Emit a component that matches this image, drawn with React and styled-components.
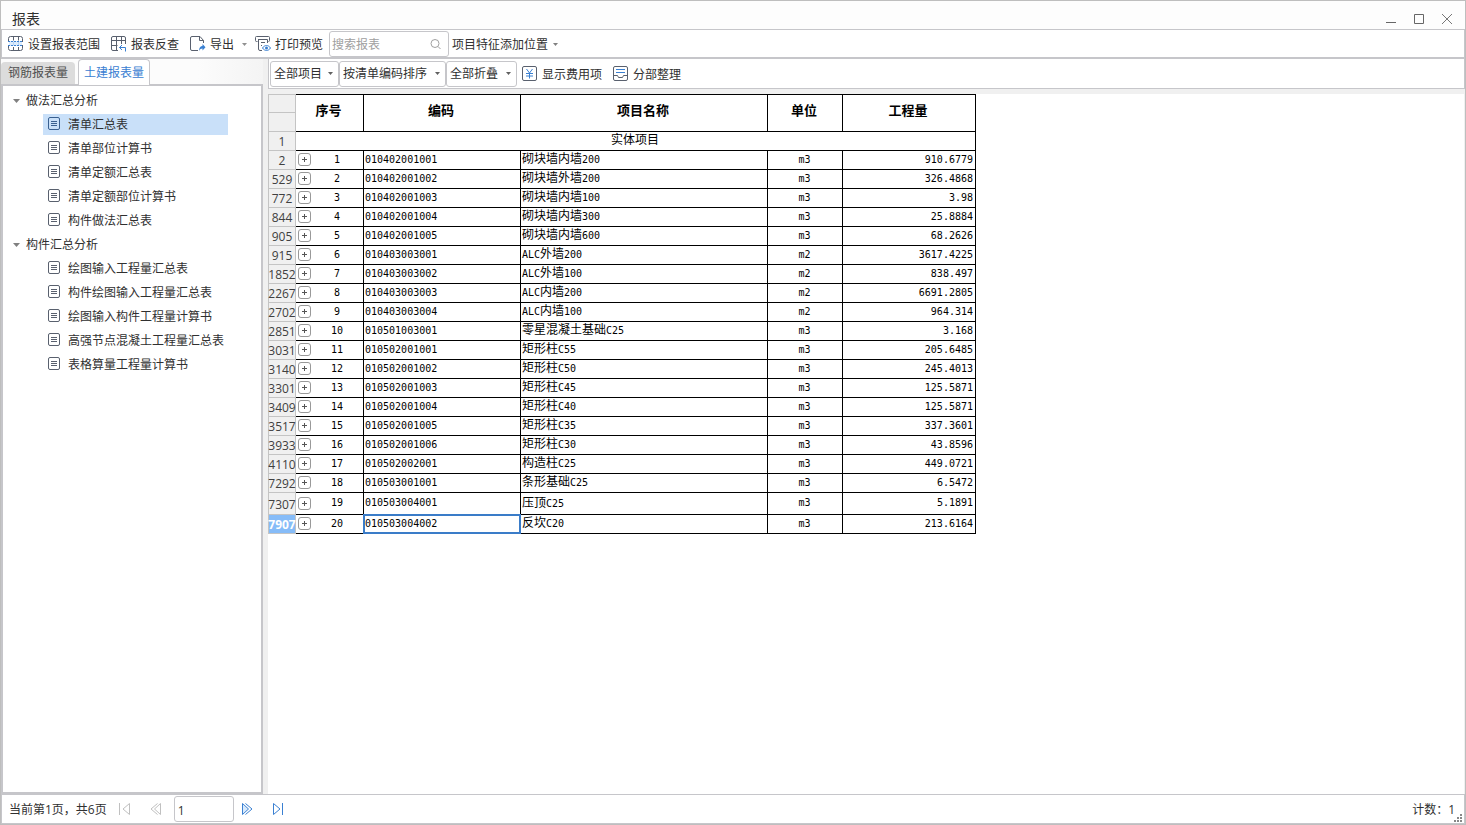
import React from "react";
import styled, { createGlobalStyle } from "styled-components";

const LINE = "#c6c6ca";
const INK = "#59606e";
const BLUE = "#3a80d2";

const GlobalStyle = createGlobalStyle`
  *, *::before, *::after { box-sizing: border-box; }
  body { margin: 0; }
  body, button, input, select {
    font-family: "Open Sans", "Noto Sans CJK SC", sans-serif;
    font-size: 12px;
    line-height: 18px;
    color: #303030;
  }
`;

const Window = styled.div`
  display: flex;
  flex-direction: column;
  height: 100vh;
  border: 1px solid #bebebe;
  background: #f0f0f0;
`;

const TitleBar = styled.header`
  display: flex;
  align-items: center;
  height: 28px;
  padding: 8px 12px 0 11px;
  background: #fdfdfd;
`;

const Title = styled.h1`
  flex: 1;
  margin: 0;
  font-size: 14px;
  line-height: 20px;
  font-weight: 400;
`;

const WindowButtons = styled.div`
  display: flex;
  gap: 16px;
`;

const IconButton = styled.button`
  display: flex;
  padding: 0;
  border: 0;
  background: none;
`;

const ToolBar = styled.div`
  display: flex;
  align-items: center;
  height: 30px;
  padding: 0 6px;
  border: 1px solid ${LINE};
  border-bottom-width: 2px;
  background: #fff;
`;

const ToolButton = styled.button`
  display: flex;
  align-items: center;
  gap: ${(p) => p.$gap || 4}px;
  margin-left: ${(p) => p.$before || 0}px;
  margin-right: ${(p) => p.$after || 0}px;
  padding: 2px 0 0;
  border: 0;
  background: none;
  white-space: nowrap;
  svg { margin-bottom: 1px; }
`;

const ToolText = styled.span`
  padding-top: 1px;
`;

const SearchBox = styled.label`
  display: flex;
  align-items: center;
  width: 120px;
  height: 26px;
  margin-right: 3px;
  padding: 0 6px 0 2px;
  border: 1px solid ${LINE};
  border-radius: 3px;
`;

const SearchInput = styled.input`
  flex: 1;
  min-width: 0;
  padding: 2px 0 0;
  border: 0;
  outline: 0;
  background: none;
  &::placeholder { color: #a0a0a0; }
`;

const Main = styled.div`
  display: flex;
  flex: 1;
  min-height: 0;
`;

const SideBar = styled.aside`
  display: flex;
  flex-direction: column;
  flex: none;
  width: 262px;
`;

const Tabs = styled.div`
  display: flex;
  align-items: flex-end;
  gap: 3px;
  height: 25px;
  background: linear-gradient(to right, #fcfcfc 75%, #f4f4f4);
`;

const Tab = styled.button`
  position: relative;
  height: ${(p) => (p.$active ? 26 : 22)}px;
  margin-bottom: ${(p) => (p.$active ? -1 : 0)}px;
  padding: 0 ${(p) => (p.$active ? 5 : 7)}px;
  border: ${(p) => (p.$active ? `1px solid ${LINE}` : "0")};
  border-bottom: 0;
  border-radius: 4px 4px 0 0;
  background: ${(p) => (p.$active ? "#fff" : "#dcdcdc")};
  color: ${(p) => (p.$active ? BLUE : "#505050")};
`;

const Tree = styled.nav`
  flex: 1;
  padding-top: 3px;
  border: 2px solid ${LINE};
  background: #fff;
`;

const List = styled.ul`
  margin: 0;
  padding: 0;
  list-style: none;
`;

const GroupLabel = styled.button`
  display: flex;
  align-items: center;
  gap: 6px;
  height: 24px;
  padding: 0 0 0 10px;
  border: 0;
  background: none;
`;

const Leaf = styled.li`
  display: flex;
  height: 24px;
  padding: 1px 0 0 40px;
`;

const LeafLink = styled.a`
  display: flex;
  align-items: center;
  gap: 7px;
  width: 185px;
  height: 21px;
  padding-left: 4px;
  background: ${(p) => (p.$selected ? "#c9e0f9" : "none")};
  color: ${(p) => (p.$selected ? "#3a6090" : INK)};
  text-decoration: none;
  white-space: nowrap;
  svg { margin-bottom: 1px; }
`;

const LeafText = styled.span`
  padding-top: 1px;
  color: #303030;
`;

const Content = styled.main`
  display: flex;
  flex-direction: column;
  flex: 1;
  min-width: 0;
  padding-left: 5px;
`;

const FilterBar = styled.div`
  display: flex;
  align-items: center;
  height: 30px;
  padding-left: 1px;
  border: 1px solid ${LINE};
  border-top: 0;
  background: #fff;
`;

const SelectBox = styled.span`
  display: grid;
  align-items: center;
  width: ${(p) => p.$width}px;
  svg { grid-area: 1 / 1; justify-self: end; margin-right: 6px; pointer-events: none; }
`;

const Select = styled.select`
  grid-area: 1 / 1;
  width: 100%;
  height: 26px;
  padding: 1px 0 0 3px;
  border: 1px solid ${LINE};
  border-radius: 3px;
  background: #fff;
  appearance: none;
`;

const Sheet = styled.div`
  flex: 1;
  min-height: 0;
  margin: 5px 1px 0 0;
  background: #fff;
  overflow: auto;
`;

const Table = styled.table`
  table-layout: fixed;
  width: 708px;
  border-collapse: separate;
  border-spacing: 0;
  color: #000;
`;

const Row = styled.tr`
  height: ${(p) => (p.$tall ? 22 : 19)}px;
`;

const Gutter = styled.th`
  padding: 2px 0 0;
  border: 1px solid #c4c4c4;
  border-top-width: ${(p) => (p.$first ? 1 : 0)}px;
  background: ${(p) => (p.$selected ? "#86bcf8" : "#f0f0f0")};
  color: ${(p) => (p.$selected ? "#fff" : "#404040")};
  line-height: 16px;
  font-weight: ${(p) => (p.$selected ? 700 : 400)};
  div { display: flex; justify-content: center; }
`;

const HeadCell = styled.th`
  padding: 0 2px 6px 0;
  border: 1px solid #000;
  border-left-width: 0;
  font-size: 13px;
  font-weight: 700;
`;

const Cell = styled.td`
  position: relative;
  padding: 0 2px 1px 1px;
  border: 1px solid #000;
  border-width: 0 1px 1px 0;
  font-family: "DejaVu Sans Mono", "Noto Sans CJK SC", monospace;
  font-size: 10px;
  line-height: 16px;
  text-align: ${(p) => p.$align || "left"};
  white-space: nowrap;
  &::after {
    content: "";
    display: ${(p) => (p.$selected ? "block" : "none")};
    position: absolute;
    inset: -1px;
    border: 2px solid #3a7cc8;
  }
`;

const Hanzi = styled.span`
  font-size: 12px;
`;

const Serial = styled.div`
  display: flex;
  align-items: center;
  span { flex: 1; padding-left: 2px; text-align: center; }
`;

const Expand = styled.button`
  display: flex;
  align-items: center;
  justify-content: center;
  width: 13px;
  height: 13px;
  margin-left: 1px;
  padding: 0;
  border: 1px solid #999;
  border-radius: 3px;
  background: #fff;
`;

const StatusBar = styled.footer`
  display: flex;
  align-items: center;
  height: 30px;
  padding: 0 2px 0 7px;
  border: 1px solid ${LINE};
  background: #fff;
`;

const StatusText = styled.span`
  padding-top: 2px;
`;

const Pager = styled.div`
  display: flex;
  align-items: center;
  gap: 19px;
  margin: 0 12px;
`;

const PageGroup = styled.div`
  display: flex;
  align-items: center;
  gap: 7px;
  margin-right: 7px;
`;

const PageInput = styled.input`
  width: 60px;
  height: 26px;
  padding: 2px 3px 0;
  border: 1px solid ${LINE};
  border-radius: 3px;
`;

const Count = styled(StatusText)`
  margin-left: auto;
`;

const Grip = styled.svg`
  align-self: flex-end;
  margin: 0 0 1px -1px;
`;

const Icon = ({ size = 16, children }) => (
  <svg width={size} height={size} viewBox={`0 0 ${size} ${size}`} fill="none" stroke={INK} aria-hidden="true">
    {children}
  </svg>
);

const Caret = ({ color = "#606060" }) => (
  <svg width="5" height="3" viewBox="0 0 5 3" aria-hidden="true">
    <path d="M0 0h5L2.500 3z" fill={color} />
  </svg>
);

const RangeIcon = () => (
  <Icon>
    <path d="M.5 6V2.500a2 2 0 0 1 2-2h10a2 2 0 0 1 2 2V6M.5 9v3.500a2 2 0 0 0 2 2h10a2 2 0 0 0 2-2V9M5.500 .5v4M10.500 .5v4M5.500 11v3.500M10.500 11v3.500" />
    <path d="M1 5h13v5H1z" fill="#dcebfb" stroke="none" />
    <path d="M0 5.500h15M0 9.500h15" stroke={BLUE} strokeDasharray="2 1" />
    <path d="M5.500 6v3M10.500 6v3" stroke="#b4d3f4" />
  </Icon>
);

const TraceIcon = () => (
  <Icon>
    <path d="M7 14.500H2a1.500 1.500 0 0 1-1.500-1.500V2A1.500 1.500 0 0 1 2 .5h11A1.500 1.500 0 0 1 14.500 2v6M.5 4.500h14M.5 9.500h6M5.500 .5v14M10.500 .5V8" />
    <path d="M14.500 15.500v-4h-6M11 9l-2.500 2.500L11 14" stroke={BLUE} />
  </Icon>
);

const ExportIcon = () => (
  <Icon>
    <path d="M8 14.500H2A1.500 1.500 0 0 1 .5 13V2A1.500 1.500 0 0 1 2 .5h8l3.500 4V7M9.500 .5v4h4" />
    <path d="M9 15c0-3.500 1.500-5 3.500-5V8l3 3.200-3 3.200v-2c-1.500 0-2.500.6-3.500 2.600z" fill={BLUE} stroke="none" />
  </Icon>
);

const PreviewIcon = () => (
  <Icon>
    <path d="M2.500 5.500h-1a1 1 0 0 1-1-1v-3a1 1 0 0 1 1-1h12a1 1 0 0 1 1 1v3a1 1 0 0 1-1 1M3 3.500h9.500V7M3.500 3.500V13A1.500 1.500 0 0 0 5 14.500h2M6 6.500h4M6 9.500h1" />
    <path d="M7.500 12c2-3.300 6-3.300 8 0-2 3.300-6 3.300-8 0z" stroke={BLUE} />
    <circle cx="11.500" cy="12" r="1.500" fill={BLUE} stroke="none" />
  </Icon>
);

const FeeIcon = () => (
  <Icon>
    <rect x=".5" y=".5" width="14" height="14" rx="1.500" />
    <path d="M4.500 3l3 4 3-4M7.500 7v5.500M4 7.500h7M4 10h7" stroke={BLUE} />
  </Icon>
);

const SortIcon = () => (
  <Icon>
    <rect x=".5" y=".5" width="14" height="14" rx="1.500" />
    <path d="M3 3.500h9M3 6.500h9" stroke={BLUE} />
    <path d="M.5 9.500h4l1 2h4l1-2h4" />
  </Icon>
);

const SheetIcon = () => (
  <svg width="14" height="14" viewBox="0 0 14 14" fill="none" stroke="currentColor" aria-hidden="true">
    <rect x="1.500" y=".5" width="11" height="12" rx="1.500" />
    <path d="M4 4.500h6M4 6.500h6M4 8.500h6" />
  </svg>
);

const tree = [
  {
    label: "做法汇总分析",
    items: ["清单汇总表", "清单部位计算书", "清单定额汇总表", "清单定额部位计算书", "构件做法汇总表"],
  },
  {
    label: "构件汇总分析",
    items: ["绘图输入工程量汇总表", "构件绘图输入工程量汇总表", "绘图输入构件工程量计算书", "高强节点混凝土工程量汇总表", "表格算量工程量计算书"],
  },
];

const rows = [
  [2, "010402001001", "砌块墙内墙200", "m3", "910.6779"],
  [529, "010402001002", "砌块墙外墙200", "m3", "326.4868"],
  [772, "010402001003", "砌块墙内墙100", "m3", "3.98"],
  [844, "010402001004", "砌块墙内墙300", "m3", "25.8884"],
  [905, "010402001005", "砌块墙内墙600", "m3", "68.2626"],
  [915, "010403003001", "ALC外墙200", "m2", "3617.4225"],
  [1852, "010403003002", "ALC外墙100", "m2", "838.497"],
  [2267, "010403003003", "ALC内墙200", "m2", "6691.2805"],
  [2702, "010403003004", "ALC内墙100", "m2", "964.314"],
  [2851, "010501003001", "零星混凝土基础C25", "m3", "3.168"],
  [3031, "010502001001", "矩形柱C55", "m3", "205.6485"],
  [3140, "010502001002", "矩形柱C50", "m3", "245.4013"],
  [3301, "010502001003", "矩形柱C45", "m3", "125.5871"],
  [3409, "010502001004", "矩形柱C40", "m3", "125.5871"],
  [3517, "010502001005", "矩形柱C35", "m3", "337.3601"],
  [3933, "010502001006", "矩形柱C30", "m3", "43.8596"],
  [4110, "010502002001", "构造柱C25", "m3", "449.0721"],
  [7292, "010503001001", "条形基础C25", "m3", "6.5472"],
  [7307, "010503004001", "压顶C25", "m3", "5.1891"],
  [7907, "010503004002", "反坎C20", "m3", "213.6164"],
];

const MixedText = ({ text }) =>
  text.split(/([\u4e00-\u9fff]+)/).map((part, i) => (i % 2 ? <Hanzi key={i}>{part}</Hanzi> : part));

const Filter = ({ label, width }) => (
  <SelectBox $width={width}>
    <Select aria-label={label}>
      <option>{label}</option>
    </Select>
    <Caret />
  </SelectBox>
);

function ReportTable() {
  return (
    <Table>
      <colgroup>
        {[28, 68, 157, 247, 75, 133].map((w, i) => (
          <col key={i} width={w} />
        ))}
      </colgroup>
      <thead>
        <Row>
          <Gutter $first />
          {["序号", "编码", "项目名称", "单位", "工程量"].map((h) => (
            <HeadCell key={h} rowSpan={2}>{h}</HeadCell>
          ))}
        </Row>
        <Row>
          <Gutter />
        </Row>
      </thead>
      <tbody>
        <Row>
          <Gutter><div>1</div></Gutter>
          <Cell colSpan={5} $align="center"><Hanzi>实体项目</Hanzi></Cell>
        </Row>
        {rows.map(([line, code, name, unit, amount], i) => {
          const selected = line === 7907;
          return (
            <Row key={line} $tall={line === 7307}>
              <Gutter $selected={selected}><div>{line}</div></Gutter>
              <Cell>
                <Serial>
                  <Expand aria-label="展开">
                    <svg width="7" height="7" viewBox="0 0 7 7" stroke="#555"><path d="M3.500 1v5M1 3.500h5" /></svg>
                  </Expand>
                  <span>{i + 1}</span>
                </Serial>
              </Cell>
              <Cell $selected={selected}>{code}</Cell>
              <Cell><MixedText text={name} /></Cell>
              <Cell $align="center">{unit}</Cell>
              <Cell $align="right">{amount}</Cell>
            </Row>
          );
        })}
      </tbody>
    </Table>
  );
}

export default function App() {
  return (
    <>
      <GlobalStyle />
      <Window>
        <TitleBar>
          <Title>报表</Title>
          <WindowButtons>
            <IconButton aria-label="最小化">
              <svg width="12" height="12" viewBox="0 0 12 12" stroke="#666"><path d="M1 9.500h10" /></svg>
            </IconButton>
            <IconButton aria-label="最大化">
              <svg width="12" height="12" viewBox="0 0 12 12" fill="none" stroke="#666"><path d="M1.500 1.500h9v9h-9z" /></svg>
            </IconButton>
            <IconButton aria-label="关闭">
              <svg width="12" height="12" viewBox="0 0 12 12" stroke="#777"><path d="M1 1l10 10M11 1L1 11" /></svg>
            </IconButton>
          </WindowButtons>
        </TitleBar>

        <ToolBar>
          <ToolButton $after={11}><RangeIcon /><ToolText>设置报表范围</ToolText></ToolButton>
          <ToolButton $after={11}><TraceIcon /><ToolText>报表反查</ToolText></ToolButton>
          <ToolButton $after={8}><ExportIcon /><ToolText>导出</ToolText></ToolButton>
          <ToolButton $after={8} aria-label="导出选项"><Caret color="#909090" /></ToolButton>
          <ToolButton $after={6}><PreviewIcon /><ToolText>打印预览</ToolText></ToolButton>
          <SearchBox>
            <SearchInput placeholder="搜索报表" aria-label="搜索报表" />
            <svg width="12" height="12" viewBox="0 0 12 12" fill="none" stroke="#a0a0a0" aria-hidden="true">
              <circle cx="5" cy="5.500" r="4" />
              <path d="M8 8.500l2.500 2.500" />
            </svg>
          </SearchBox>
          <ToolButton $gap={5}><ToolText>项目特征添加位置</ToolText><Caret color="#808080" /></ToolButton>
        </ToolBar>

        <Main>
          <SideBar>
            <Tabs role="tablist">
              <Tab role="tab" aria-selected="false">钢筋报表量</Tab>
              <Tab role="tab" aria-selected="true" $active>土建报表量</Tab>
            </Tabs>
            <Tree>
              <List>
                {tree.map((group, g) => (
                  <li key={group.label}>
                    <GroupLabel aria-expanded="true">
                      <svg width="7" height="4" viewBox="0 0 7 4" aria-hidden="true"><path d="M0 0h7L3.500 4z" fill="#808080" /></svg>
                      {group.label}
                    </GroupLabel>
                    <List>
                      {group.items.map((item, i) => (
                        <Leaf key={item}>
                          <LeafLink href="#" $selected={g === 0 && i === 0}>
                            <SheetIcon />
                            <LeafText>{item}</LeafText>
                          </LeafLink>
                        </Leaf>
                      ))}
                    </List>
                  </li>
                ))}
              </List>
            </Tree>
          </SideBar>

          <Content>
            <FilterBar>
              <Filter label="全部项目" width={69} />
              <Filter label="按清单编码排序" width={107} />
              <Filter label="全部折叠" width={71} />
              <ToolButton $before={5} $after={11}><FeeIcon /><ToolText>显示费用项</ToolText></ToolButton>
              <ToolButton><SortIcon /><ToolText>分部整理</ToolText></ToolButton>
            </FilterBar>
            <Sheet>
              <ReportTable />
            </Sheet>
          </Content>
        </Main>

        <StatusBar>
          <StatusText>当前第1页，共6页</StatusText>
          <Pager>
            <IconButton aria-label="首页">
              <svg width="12" height="14" viewBox="0 0 12 14" fill="none" stroke="#c0c0c0"><path d="M.5 1v12M10.500 1.500v11L4 7z" /></svg>
            </IconButton>
            <IconButton aria-label="上一页">
              <svg width="12" height="14" viewBox="0 0 12 14" fill="none" stroke="#c0c0c0"><path d="M7.500 1.500L1 7l6.500 5.500M10.500 1.500L4.500 7l6 5.500z" /></svg>
            </IconButton>
          </Pager>
          <PageGroup>
            <PageInput defaultValue="1" aria-label="页码" />
            <IconButton aria-label="下一页">
              <svg width="12" height="14" viewBox="0 0 12 14" fill="#d8eafc" stroke={BLUE}><path d="M1.500 1.500v11L7.500 7z" /><path d="M4.500 1.500L11 7l-6.500 5.500" fill="none" /></svg>
            </IconButton>
          </PageGroup>
          <Pager>
            <IconButton aria-label="末页">
              <svg width="12" height="14" viewBox="0 0 12 14" fill="none" stroke={BLUE}><path d="M1.500 1.500v11L8 7zM10.500 1v12" /></svg>
            </IconButton>
          </Pager>
          <Count>计数：1</Count>
          <Grip width="8" height="8" viewBox="0 0 8 8" fill="#888" aria-hidden="true">
            <path d="M6 0h2v2H6zM3 3h2v2H3zM6 3h2v2H6zM0 6h2v2H0zM3 6h2v2H3zM6 6h2v2H6z" />
          </Grip>
        </StatusBar>
      </Window>
    </>
  );
}
